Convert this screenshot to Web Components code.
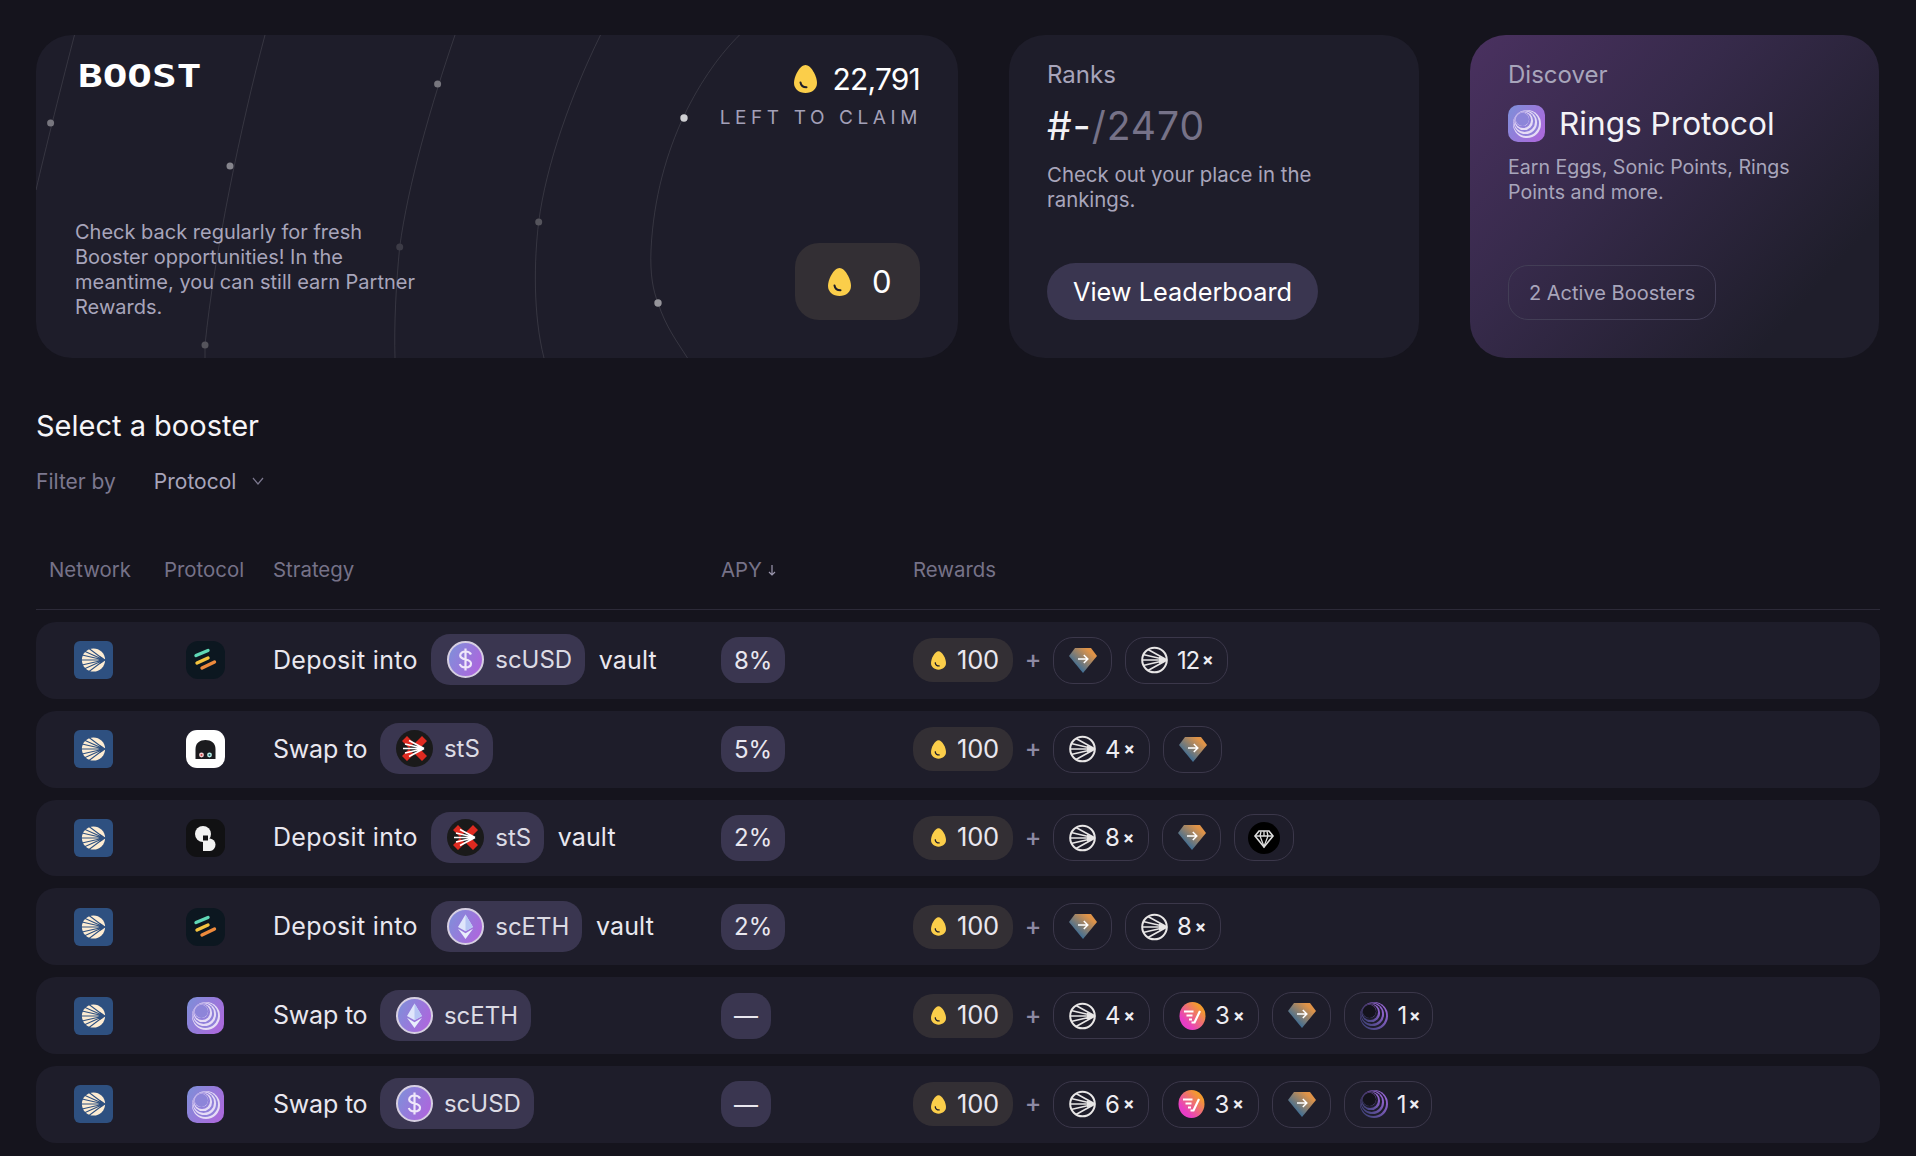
<!DOCTYPE html>
<html><head><meta charset="utf-8"><title>Boost</title>
<style>
html,body{margin:0;height:100%;overflow:hidden;background:#15141d}
body{font-family:"Inter","Noto Sans",sans-serif;color:#e9e7ef}
boost-page{display:block}
.dep{letter-spacing:.3px}
.swp{letter-spacing:-.2px;margin-right:-1px}
</style></head><body>
<boost-page>
  <hero-card slot="cards">
    <span slot="logo">BOOST</span>
    <span slot="value">22,791</span>
    <span slot="label">LEFT TO CLAIM</span>
    <span slot="desc">Check back regularly for fresh Booster opportunities! In the meantime, you can still earn Partner Rewards.</span>
    <span slot="count">0</span>
  </hero-card>
  <rank-card slot="cards">
    <span slot="title">Ranks</span>
    <span slot="rank">#-</span><span slot="total">/2470</span>
    <span slot="desc">Check out your place in the rankings.</span>
    <span slot="action">View Leaderboard</span>
  </rank-card>
  <discover-card slot="cards">
    <span slot="title">Discover</span>
    <span slot="name">Rings Protocol</span>
    <span slot="desc">Earn Eggs, Sonic Points, Rings Points and more.</span>
    <span slot="action">2 Active Boosters</span>
  </discover-card>
  <section-head>
    <span slot="title">Select a booster</span>
    <span slot="filter">Filter by</span>
    <span slot="value">Protocol</span>
  </section-head>
  <table-head></table-head>
  <booster-list>
    <booster-row protocol="silo" apy="8%">
      <span class="dep">Deposit into</span><token-pill icon="usd">scUSD</token-pill><span>vault</span>
      <reward-pill slot="rewards" icon="gem"></reward-pill>
      <reward-pill slot="rewards" icon="sonic" mult="12"></reward-pill>
    </booster-row>
    <booster-row protocol="ghost" apy="5%">
      <span class="swp">Swap to</span><token-pill icon="sts">stS</token-pill>
      <reward-pill slot="rewards" icon="sonic" mult="4"></reward-pill>
      <reward-pill slot="rewards" icon="gem"></reward-pill>
    </booster-row>
    <booster-row protocol="blob" apy="2%">
      <span class="dep">Deposit into</span><token-pill icon="sts">stS</token-pill><span>vault</span>
      <reward-pill slot="rewards" icon="sonic" mult="8"></reward-pill>
      <reward-pill slot="rewards" icon="gem"></reward-pill>
      <reward-pill slot="rewards" icon="blackgem"></reward-pill>
    </booster-row>
    <booster-row protocol="silo" apy="2%">
      <span class="dep">Deposit into</span><token-pill icon="eth">scETH</token-pill><span>vault</span>
      <reward-pill slot="rewards" icon="gem"></reward-pill>
      <reward-pill slot="rewards" icon="sonic" mult="8"></reward-pill>
    </booster-row>
    <booster-row protocol="rings" apy="—">
      <span class="swp">Swap to</span><token-pill icon="eth">scETH</token-pill>
      <reward-pill slot="rewards" icon="sonic" mult="4"></reward-pill>
      <reward-pill slot="rewards" icon="swirl" mult="3"></reward-pill>
      <reward-pill slot="rewards" icon="gem"></reward-pill>
      <reward-pill slot="rewards" icon="ringsdark" mult="1"></reward-pill>
    </booster-row>
    <booster-row protocol="rings" apy="—">
      <span class="swp">Swap to</span><token-pill icon="usd">scUSD</token-pill>
      <reward-pill slot="rewards" icon="sonic" mult="6"></reward-pill>
      <reward-pill slot="rewards" icon="swirl" mult="3"></reward-pill>
      <reward-pill slot="rewards" icon="gem"></reward-pill>
      <reward-pill slot="rewards" icon="ringsdark" mult="1"></reward-pill>
    </booster-row>
  </booster-list>
</boost-page>
<script>
const CREAM='#fdecd2',NAVY='#2e5080';
function rings(cx,cy,fa,fb){
  return [14,12.8,11.6,10.4,9.2,8,6.8].map((r,i)=>{const d=(14-r)*.65;return `<circle cx="${cx-d}" cy="${cy-d}" r="${r}" fill="${i%2?fb:fa}"/>`}).join('');
}
const ICONS={
 egg:[23,28,`<path d="M11.5 0C17 0 23 11 23 18C23 24 18 28 11.5 28C5 28 0 24 0 18C0 11 6 0 11.5 0Z" fill="#fbce4a"/><path d="M6.5 17.5C7 20.5 9 22.3 12.5 22.3" fill="none" stroke="#1e1d2a" stroke-width="2" stroke-linecap="round"/>`],
 sonicnet:[39,38,`<rect width="39" height="38" rx="6" fill="${NAVY}"/><circle cx="19.5" cy="19" r="11.6" fill="${CREAM}"/><path d="M31.5 19H7M30 19L8 14M30 19L10 10M29 18L15 7.5M30 19L8 24M30 19L10 28M29 20L15 30.5" stroke="${NAVY}" stroke-width="1.1" fill="none"/><path d="M32 19L26 15L27.5 19L26 23Z" fill="${NAVY}"/>`],
 sonic:[27,28,`<circle cx="13.5" cy="14" r="12.3" fill="none" stroke="#e8e6e6" stroke-width="2"/><path d="M26 14H1.5M26 14L2 8.5M26 14L7 3.5M26 14L2 19.5M26 14L7 24.5" stroke="#e8e6e6" stroke-width="1.6" fill="none"/><path d="M26 14L18 10.5V17.5Z" fill="#e8e6e6"/>`],
 gem:[28,25,`<defs><linearGradient id="g" x1="0" y1="1" x2="1" y2="0"><stop offset=".2" stop-color="#2f6a9c"/><stop offset=".8" stop-color="#df9348"/></linearGradient></defs><path d="M6 0H22L28 8L14 25L0 8Z" fill="url(#g)"/><path d="M9 11H18.5M14.8 7L18.8 11L14.8 15" stroke="#fff" stroke-width="1.5" fill="none"/>`],
 blackgem:[32,32,`<circle cx="16" cy="16" r="16" fill="#000"/><path d="M11 9H21L25 14L16 25L7 14Z" fill="none" stroke="#ddd" stroke-width="1.6"/><path d="M7 14H25M13 9.5L12 14L16 24.5L20 14L19 9.5M16 9V14" fill="none" stroke="#ddd" stroke-width="1.3"/>`],
 swirl:[27,28,`<defs><linearGradient id="p" x1="0" y1="1" x2="1" y2="0"><stop offset=".25" stop-color="#e83dc4"/><stop offset=".8" stop-color="#f39a2e"/></linearGradient></defs><ellipse cx="13.5" cy="14" rx="13" ry="14" fill="url(#p)"/><path d="M5 9.5H14.5M7.5 13.5H13.5M10 17.5H13M21 9L15.5 20.5H12.5" stroke="#fff" stroke-width="2.2" fill="none"/>`],
 ringsdark:[28,28,`<defs><linearGradient id="r" x1="0" y1="1" x2="1" y2="0"><stop offset=".15" stop-color="#45457f"/><stop offset=".85" stop-color="#9866d6"/></linearGradient></defs>${rings(14,14,'url(#r)','#1e1d2a')}<circle cx="9.4" cy="9.4" r="6.6" fill="#14131c"/>`],
 silo:[39,38,`<rect width="39" height="38" rx="12" fill="#0c1720"/><path d="M10 14.5L22 9.5" stroke="#60d8b6" stroke-width="3.4" stroke-linecap="round"/><path d="M11 22L22 17" stroke="#f3c33f" stroke-width="3.4" stroke-linecap="round"/><path d="M16 27L28.5 21" stroke="#ee8a3c" stroke-width="3.4" stroke-linecap="round"/>`],
 ghost:[39,38,`<rect width="39" height="38" rx="11" fill="#fff"/><path d="M9.5 29V19C9.5 13 14 10 19.5 10C25 10 29.5 13 29.5 19V29Z" fill="#1b1b1e"/><circle cx="15.5" cy="25" r="2.4" fill="#f4d0d2"/><circle cx="15.5" cy="25" r="1" fill="#d04040"/><circle cx="23.5" cy="25" r="2.4" fill="#bdeee8"/><circle cx="23.5" cy="25" r="1" fill="#1a6a70"/>`],
 blob:[39,38,`<rect width="39" height="38" rx="11" fill="#111113"/><circle cx="17" cy="15" r="8" fill="#f2f2f2"/><path d="M17 19.5H24A6.3 6.3 0 0 1 24 32H17Z" fill="#f2f2f2"/><rect x="17" y="16.5" width="5" height="5" fill="#111113"/>`],
 ringsapp:[37,37,`<defs><linearGradient id="b" x1="0" y1="0" x2="1" y2=".6"><stop offset="0" stop-color="#7c90d8"/><stop offset="1" stop-color="#a96bdc"/></linearGradient></defs><rect width="37" height="37" rx="10" fill="url(#b)"/>${rings(19,19,'#e6dcf6','#9180da')}<circle cx="14.4" cy="14.4" r="6.6" fill="#8d85d9"/>`],
 usd:[37,37,`<defs><linearGradient id="t" x1="0" y1="0" x2="1" y2=".5"><stop offset="0" stop-color="#7b93d9"/><stop offset="1" stop-color="#ab68dd"/></linearGradient></defs><circle cx="18.5" cy="18.5" r="17.5" fill="url(#t)" stroke="#d6cfe2" stroke-width="2"/><path d="M24 13.5C23 11.2 21 10.5 18.5 10.5C15.5 10.5 13.2 12 13.2 14.6C13.2 20 24 17 24 22.6C24 25.2 21.5 26.5 18.5 26.5C15.6 26.5 13.6 25.4 12.8 23M18.5 7.5V29.5" fill="none" stroke="#efe7fa" stroke-width="2.2"/>`],
 eth:[37,37,`<defs><linearGradient id="t" x1="0" y1="0" x2="1" y2=".5"><stop offset="0" stop-color="#7b93d9"/><stop offset="1" stop-color="#ab68dd"/></linearGradient></defs><circle cx="18.5" cy="18.5" r="17.5" fill="url(#t)" stroke="#d6cfe2" stroke-width="2"/><path d="M18.5 6.5L11 19L18.5 23.3L26 19Z" fill="#dfe6fb"/><path d="M18.5 6.5V23.3L26 19Z" fill="#b7c6f4"/><path d="M11 20.8L18.5 31L26 20.8L18.5 25.2Z" fill="#e9eefc"/>`],
 sts:[37,37,`<circle cx="18.5" cy="18.5" r="18.5" fill="#1a1a1a"/><path d="M6 11L11 6L18 13L13 18ZM31 11L26 6L19 13L24 18ZM6 26L11 31L18 24L13 19ZM31 26L26 31L19 24L24 19Z" fill="#df2a20"/><path d="M28 18.5H7M28 18.5L9 14M28 18.5L9 23M28 18.5L13 10.5M28 18.5L13 26.5" stroke="#fff" stroke-width="1.7" fill="none"/>`]
};
function svg(name){const i=ICONS[name];return `<svg xmlns="http://www.w3.org/2000/svg" width="${i[0]}" height="${i[1]}" viewBox="0 0 ${i[0]} ${i[1]}" style="display:block;flex:none">${i[2]}</svg>`}
function def(tag,html){customElements.define(tag,class extends HTMLElement{
  constructor(){super();this.attachShadow({mode:'open'})}
  connectedCallback(){this.shadowRoot.innerHTML=typeof html==='function'?html(this):html}
})}
def('boost-page',`<style>:host{display:block;padding:35px 36px 0;box-sizing:border-box;width:1916px}
.cards{display:grid;grid-template-columns:922px 410px 409px;column-gap:51px;height:323px}</style>
<div class="cards"><slot name="cards"></slot></div><slot></slot>`);
def('hero-card',`<style>:host{display:flex;flex-direction:column;justify-content:space-between;position:relative;overflow:hidden;box-sizing:border-box;height:323px;background:#1e1d2a;border-radius:36px;padding:29px 38px 38px 39px}
.arcs{position:absolute;inset:0}
.row{position:relative;display:flex;justify-content:space-between}
.top{align-items:flex-start}.bot{align-items:flex-end}
.logo{font:700 32px/24px "DejaVu Sans Mono",monospace;color:#fff;margin:0 0 0 3px;transform:scaleX(1.28);transform-origin:0 50%}
.stat{display:flex;flex-direction:column;align-items:flex-end}
.val{display:flex;align-items:center;gap:16px;font-size:30px;line-height:28px;color:#fff;letter-spacing:-.8px;margin-top:1px}
.lab{font-size:19px;line-height:24px;letter-spacing:4.6px;color:#a3a0b8;margin:13px -2px 0 0}
.desc{font-size:20px;line-height:25px;color:#a8a5bb;width:360px}
.box{display:flex;align-items:center;gap:21px;box-sizing:border-box;width:125px;height:77px;padding-left:33px;background:#332f34;border-radius:24px;font-size:31px;color:#fff}
</style>
<svg class="arcs" width="922" height="323" viewBox="0 0 922 323" fill="none" stroke="rgba(255,255,255,.11)">
<path d="M38.5 0C28 40 8 120 0 155"/><path d="M229 0C205 90 178 220 169 310L169 323"/><path d="M419 0C395 70 372 150 363.7 212C360 250 358 290 359 323"/><path d="M564.5 0C535 60 510 130 502.7 187C498 225 497 280 508 323"/><path d="M703.5 0C668 35 620 110 615 215C614 240 617 255 622 268C630 292 640 305 651.5 323"/>
<g stroke="none"><circle cx="14.6" cy="88" r="3.5" fill="#77767e"/><circle cx="194" cy="131" r="3.5" fill="#85848c"/><circle cx="169" cy="310" r="3.5" fill="#55545c"/><circle cx="401.6" cy="49" r="3.5" fill="#77767e"/><circle cx="363.7" cy="212" r="3.5" fill="#3c3b46"/><circle cx="502.7" cy="187" r="3.5" fill="#55545c"/><circle cx="648" cy="83" r="3.7" fill="#cfcfd2"/><circle cx="622" cy="268" r="3.7" fill="#96959b"/></g></svg>
<div class="row top"><div class="logo"><slot name="logo"></slot></div><div class="stat"><div class="val">${svg('egg')}<slot name="value"></slot></div><div class="lab"><slot name="label"></slot></div></div></div>
<div class="row bot"><div class="desc"><slot name="desc"></slot></div><div class="box">${svg('egg')}<slot name="count"></slot></div></div>`);
def('rank-card',`<style>:host{display:flex;flex-direction:column;box-sizing:border-box;height:323px;background:#1e1d2a;border-radius:36px;padding:24px 38px 38px 38px}
.t{font-size:24px;line-height:32px;color:#a8a5bb}
.r{font-size:39px;line-height:44px;color:#767288;margin-top:13px;letter-spacing:1px}
.r ::slotted([slot=rank]){color:#f2f1f5}
.d{font-size:20.4px;line-height:25px;color:#a8a5bb;margin-top:14px;flex:1}
.b{align-self:flex-start;display:flex;align-items:center;height:57px;padding:0 26px;border-radius:29px;background:#3a3650;color:#fff;font-size:25.3px}
</style><div class="t"><slot name="title"></slot></div><div class="r"><slot name="rank"></slot><slot name="total"></slot></div><div class="d"><slot name="desc"></slot></div><div class="b"><slot name="action"></slot></div>`);
def('discover-card',`<style>:host{display:flex;flex-direction:column;box-sizing:border-box;height:323px;border-radius:36px;padding:24px 38px 38px 38px;background:linear-gradient(132deg,#4a3160 0%,#362a4a 38%,#1f1e2b 82%)}
.t{font-size:24px;line-height:32px;color:#a8a5bb}
.n{display:flex;align-items:center;gap:14px;font-size:31.6px;line-height:37px;color:#f4f3f7;margin-top:14px}
.d{font-size:19.6px;line-height:25px;color:#a8a5bb;margin-top:13px;flex:1}
.b{align-self:flex-start;display:flex;align-items:center;box-sizing:border-box;height:55px;padding:0 20px;border:1px solid #433e56;border-radius:20px;color:#a8a5bb;font-size:20px}
</style><div class="t"><slot name="title"></slot></div><div class="n">${svg('ringsapp')}<slot name="name"></slot></div><div class="d"><slot name="desc"></slot></div><div class="b"><slot name="action"></slot></div>`);
def('section-head',`<style>:host{display:block;margin-top:50px}
h2{margin:0;font-weight:400;font-size:29px;line-height:36px;color:#f6f5f8}
.f{display:flex;align-items:center;margin-top:23px;height:28px;font-size:21px;color:#7c788f}
.v{color:#a8a5bb;margin-left:38px}svg{margin-left:16px}
</style><h2><slot name="title"></slot></h2><div class="f"><slot name="filter"></slot><span class="v"><slot name="value"></slot></span><svg width="12" height="8" viewBox="0 0 12 8" fill="none" stroke="#7c788f" stroke-width="1.2"><path d="M1 1L6 7L11 1"/></svg></div>`);
const COLS='grid-template-columns:115px 108px 449px 192px 1fr';
def('table-head',`<style>:host{display:grid;${COLS};margin-top:61px;padding-bottom:25px;border-bottom:1px solid #2c2a38;font-size:20.4px;line-height:28px;color:#767288}
div{padding-left:13px;white-space:nowrap;display:flex;align-items:center;gap:6px}
</style><div>Network</div><div>Protocol</div><div style="padding-left:14px">Strategy</div><div>APY<svg width="8" height="11" viewBox="0 0 8 11" fill="none" stroke="#9a96ad" stroke-width="1.2"><path d="M4 0V10M1 7L4 10L7 7"/></svg></div><div>Rewards</div>`);
def('booster-list',`<style>:host{display:flex;flex-direction:column;gap:12px;margin-top:12px}</style><slot></slot>`);
def('booster-row',el=>`<style>:host{display:grid;${COLS};align-items:center;height:76.8px;background:#1e1d2a;border-radius:20px;font-size:24px;color:#e9e7ef}
.c{display:flex;justify-content:center}.s{display:flex;align-items:center;gap:13.5px;padding-left:14px;white-space:nowrap;font-size:25px;letter-spacing:.15px;margin-top:-1px}
.a{padding-left:13px}.apy{display:inline-flex;align-items:center;height:46px;padding:0 13px;border-radius:18px;background:#3a3650}
.w{display:flex;align-items:center;padding-left:13px}
.e{display:flex;align-items:center;box-sizing:border-box;width:100px;height:44px;padding-left:18px;gap:11px;background:#332f34;border-radius:20px;font-size:25.5px;letter-spacing:-.2px}
.e span{margin-top:-2px}
.e svg{width:15px;height:19px}
.p{width:40px;text-align:center;color:#8d89a3;font-size:25px;font-weight:500;margin-top:-2px}
.l{display:flex;gap:13px}
</style><div class="c">${svg('sonicnet')}</div><div class="c">${el.getAttribute('protocol')==='rings'?svg('ringsapp'):svg(el.getAttribute('protocol'))}</div><div class="s"><slot></slot></div><div class="a"><span class="apy">${el.getAttribute('apy')}</span></div><div class="w"><div class="e">${svg('egg')}<span>100</span></div><span class="p">+</span><div class="l"><slot name="rewards"></slot></div></div>`);
def('token-pill',el=>`<style>:host{display:inline-flex;align-items:center;height:51px;box-sizing:border-box;padding:0 13px 0 16px;gap:11px;border-radius:19px;background:#3a3650;color:#dcdbe4;font-size:24px;letter-spacing:0}</style>${svg(el.getAttribute('icon'))}<slot></slot>`);
def('reward-pill',el=>{const m=el.getAttribute('mult'),ic=el.getAttribute('icon');const one=m&&m[0]==='1';return `<style>:host{display:inline-flex;align-items:center;box-sizing:border-box;height:47px;padding:0 ${ic==='ringsdark'?11:m?(one?13:14):ic==='blackgem'?13:14}px 0 ${ic==='blackgem'?13:15}px;gap:9px;border:1px solid #3b374a;border-radius:20px;color:#eeedf2}
span{letter-spacing:${one?'-1.2px':'0'}}
i{font-style:normal;font-size:17px;font-weight:700;margin-left:-6px}</style>${svg(ic)}${m?`<span>${m}</span><i>×</i>`:''}`});
</script>
</body></html>
